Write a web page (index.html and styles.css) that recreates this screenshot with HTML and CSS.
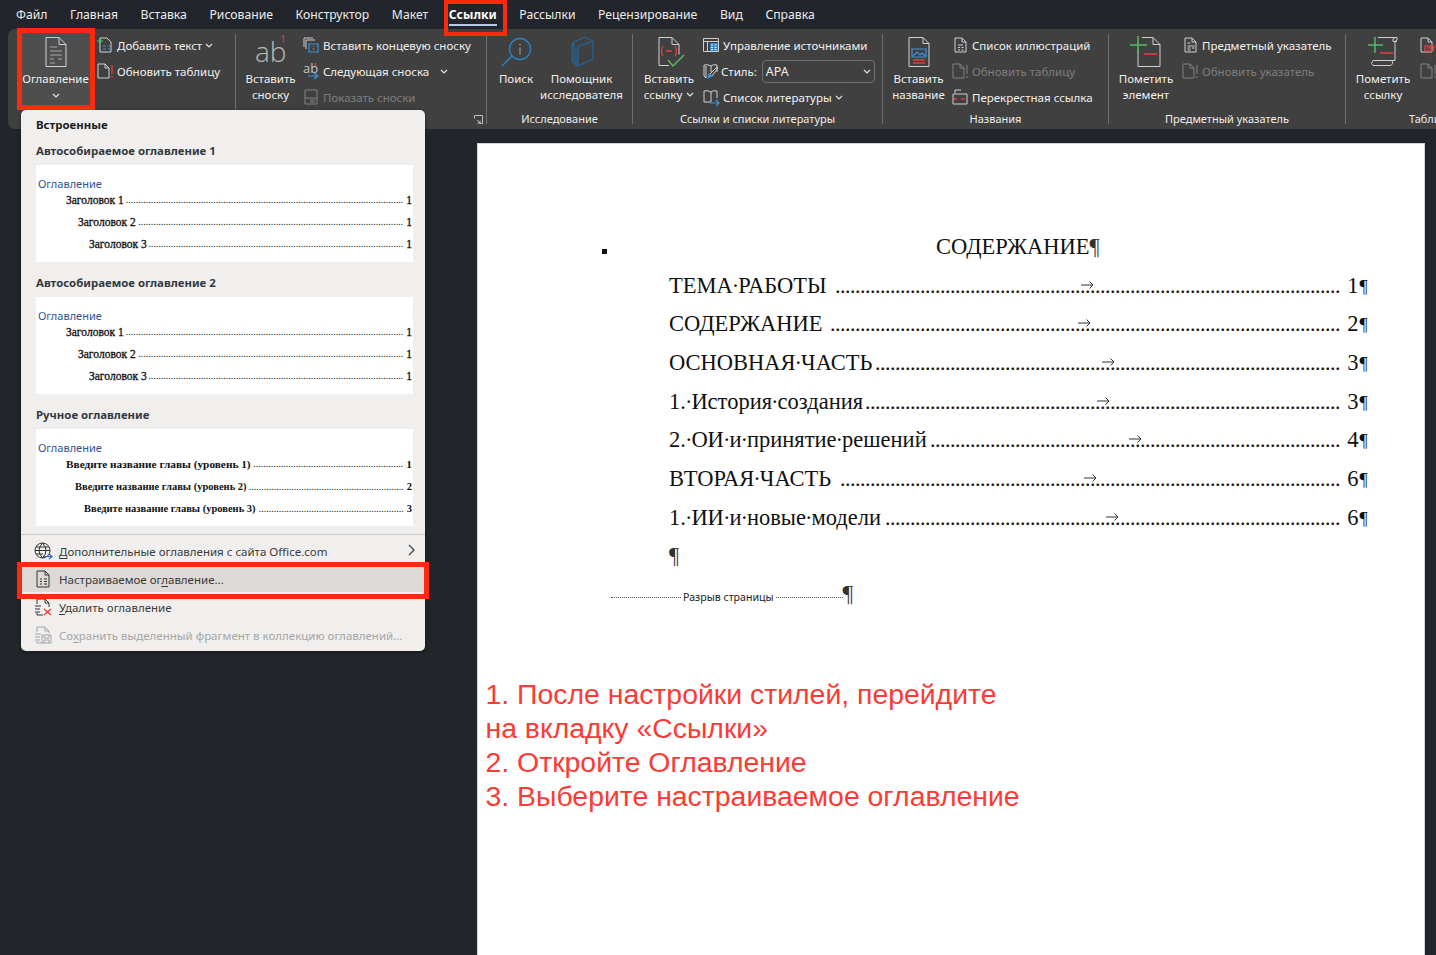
FILE: index.html
```html
<!DOCTYPE html>
<html lang="ru">
<head>
<meta charset="utf-8">
<title>Оглавление</title>
<link rel="stylesheet" href="styles.css">
</head>
<body>
<div class="app">
  <nav class="tabs">
    <span class="tab">Файл</span><span class="tab">Главная</span><span class="tab">Вставка</span><span class="tab">Рисование</span><span class="tab">Конструктор</span><span class="tab">Макет</span><span class="tab active">Ссылки</span><span class="tab">Рассылки</span><span class="tab">Рецензирование</span><span class="tab">Вид</span><span class="tab">Справка</span>
  </nav>

  <section class="ribbon">
    <div class="group g1">
      <div class="gbody">
        <div class="big w69 hot">
          <svg class="bigicon" viewBox="0 0 32 32"><path class="ln" d="M6 1.500h13l7 7v22H6z"/><path class="ln" d="M19 1.500v7h7"/><path class="ln thin" d="M10 11h7M10 15h12M10 19h12M10 23h4M18 23h4M10 27h5"/></svg>
          <span>Оглавление</span>
          <svg class="chev" viewBox="0 0 8 5"><path d="M1 1l3 3 3-3"/></svg>
        </div>
        <div class="col m7">
          <div class="row"><svg class="ico" viewBox="0 0 16 16"><path class="ln" d="M3 1h7l4 4v10H3z"/><path class="blue" d="M6 9h3M11 9h2M6 12h3M11 12h2"/><path class="green" d="M0 4h6M3 1v6"/></svg><span>Добавить текст</span><svg class="chev" viewBox="0 0 8 5"><path d="M1 1l3 3 3-3"/></svg></div>
          <div class="row"><svg class="ico" viewBox="0 0 16 16"><path class="ln" d="M1 1h7l4 4v10H1z"/><path class="ln" d="M8 1v4h4"/><path class="red" d="M15 2v9M15 13v2"/></svg><span>Обновить таблицу</span></div>
        </div>
      </div>
      <div class="glabel"></div>
    </div>
    <i class="sep"></i>

    <div class="group g2">
      <div class="gbody">
        <div class="big w49">
          <svg class="bigicon" viewBox="0 0 32 32"><text class="abtext" x="0" y="26">ab</text><text class="abnum" x="25" y="7">1</text></svg>
          <span>Вставить</span><span>сноску</span>
        </div>
        <div class="col m8">
          <div class="row"><svg class="ico" viewBox="0 0 16 16"><path class="ln" d="M1 10V1h9M3 12V3h9"/><path class="blue" d="M6 7v8h9V7zM10.500 9v1M10.500 11v2"/></svg><span>Вставить концевую сноску</span></div>
          <div class="row"><svg class="ico" viewBox="0 0 16 16"><text class="absmall" x="0" y="10">ab</text><path class="blue" d="M5 13h10M11 10l4 3-4 3"/><path class="red" d="M12.500 0v3"/></svg><span class="wide">Следующая сноска</span><svg class="chev" viewBox="0 0 8 5"><path d="M1 1l3 3 3-3"/></svg></div>
          <div class="row off"><svg class="ico" viewBox="0 0 16 16"><path class="ln" d="M2 1h12v14H2zM2 9h12M7 11h5M7 13h5"/></svg><span>Показать сноски</span></div>
        </div>
      </div>
      <div class="glabel"><svg class="launch" viewBox="0 0 9 9"><path d="M.500 3.500V.5h8v8h-3M3 5l3 3M6 5.500V8H3.500"/></svg></div>
    </div>
    <i class="sep"></i>

    <div class="group g3">
      <div class="gbody">
        <div class="big w36">
          <svg class="bigicon" viewBox="0 0 32 32"><circle class="bl" cx="20" cy="13" r="10.500"/><path class="bl" d="M12 20L2 30"/><path class="ln thin" d="M20 8v1.500M20 11.500v7"/></svg>
          <span>Поиск</span>
        </div>
        <div class="big w81 m7">
          <svg class="bigicon" viewBox="0 0 32 32"><path class="bld" d="M8 6l11-5 8 4v18l-15 7-6-4V9zM12 10l15-5M12 10v21M10 13v15M8 6v20"/></svg>
          <span>Помощник</span><span>исследователя</span>
        </div>
      </div>
      <div class="glabel">Исследование</div>
    </div>
    <i class="sep"></i>

    <div class="group g4">
      <div class="gbody">
        <div class="big w48">
          <svg class="bigicon" viewBox="0 0 32 32"><path class="ln" d="M6 1.500h13l7 7v10M19 1.500v7h7M6 1.500v28h10"/><path class="red" d="M10 10q-3 5 0 10M22 10q3 5 0 10M13 15h6"/><path class="green2" d="M15 24l5 6 11-11"/></svg>
          <span>Вставить</span><span>ссылку<svg class="chev inl" viewBox="0 0 8 5"><path d="M1 1l3 3 3-3"/></svg></span>
        </div>
        <div class="col m10">
          <div class="row"><svg class="ico" viewBox="0 0 16 16"><path class="ln" d="M.5 1.500h15v13H.5zM.5 4.500h15M4.500 4.500v10"/><path class="fillb" d="M7 6h8v8H7z"/><path class="wt" d="M8 8h2M11.500 8h2M8 10.500h2M11.500 10.500h2M8 12.500h2M11.500 12.500h2"/></svg><span>Управление источниками</span></div>
          <div class="row"><svg class="ico" viewBox="0 0 16 16"><path class="ln" d="M8 3Q5 1 1 2v11l2 2V3M8 3q2-2 6-1v7M8 3v6"/><path class="blue thick" d="M5 15l1-4 3 2z"/><path class="ln" d="M7 11l7-7 1 1-6 8"/></svg><span class="lbl">Стиль:</span><div class="select"><span>APA</span><svg class="chev" viewBox="0 0 8 5"><path d="M1 1l3 3 3-3"/></svg></div></div>
          <div class="row"><svg class="ico" viewBox="0 0 16 16"><path class="ln" d="M8 3Q5 1 1 2v11h7V3q2-2 6-1v7"/><path class="blue" d="M7 14h9M13 11l3 3-3 3"/></svg><span>Список литературы</span><svg class="chev" viewBox="0 0 8 5"><path d="M1 1l3 3 3-3"/></svg></div>
        </div>
      </div>
      <div class="glabel">Ссылки и списки литературы</div>
    </div>
    <i class="sep"></i>

    <div class="group g5">
      <div class="gbody">
        <div class="big w49">
          <svg class="bigicon" viewBox="0 0 32 32"><path class="ln" d="M6 1.500h14l6 6v23H6zM20 1.500v6h6"/><path class="blue" d="M9 13h14v8H9z"/><path class="blue" d="M10 20l4-4 3 3 2-2 3 3"/><path class="red" d="M10 24h12M10 27h12"/></svg>
          <span>Вставить</span><span>название</span>
        </div>
        <div class="col m9">
          <div class="row"><svg class="ico" viewBox="0 0 16 16"><path class="ln" d="M3 1h7l4 4v10H3zM10 1v4h4M6 8h5M6 10.500h2M9.500 10.500h2M6 13h2M9.500 13h2"/></svg><span>Список иллюстраций</span></div>
          <div class="row off"><svg class="ico" viewBox="0 0 16 16"><path class="ln" d="M1 1h7l4 4v10H1zM8 1v4h4M15 2v9M15 13v2"/></svg><span>Обновить таблицу</span></div>
          <div class="row"><svg class="ico" viewBox="0 0 16 16"><path class="ln" d="M3 4V1h6M1 5h6M1 5v10h6M7 5h8v10H7"/><path class="red" d="M9 10h4M2 10h3"/></svg><span>Перекрестная ссылка</span></div>
        </div>
      </div>
      <div class="glabel">Названия</div>
    </div>
    <i class="sep"></i>

    <div class="group g6">
      <div class="gbody">
        <div class="big w54">
          <svg class="bigicon" viewBox="0 0 32 32"><path class="ln" d="M12 1.500h11l7 7v22H8V14M23 1.500v7h7"/><path class="green2" d="M0 9h17M8 0v17"/><path class="red" d="M14 18h13"/></svg>
          <span>Пометить</span><span>элемент</span>
        </div>
        <div class="col m9">
          <div class="row"><svg class="ico" viewBox="0 0 16 16"><path class="ln" d="M3 1h7l4 4v10H3zM10 1v4h4M5.500 6h3M5.500 9h7M5.500 11h3M10 11h2.500M5.500 13h3"/></svg><span>Предметный указатель</span></div>
          <div class="row off"><svg class="ico" viewBox="0 0 16 16"><path class="ln" d="M1 1h7l4 4v10H1zM8 1v4h4M15 2v9M15 13v2"/></svg><span>Обновить указатель</span></div>
        </div>
      </div>
      <div class="glabel">Предметный указатель</div>
    </div>
    <i class="sep"></i>

    <div class="group g7">
      <div class="gbody">
        <div class="big w54">
          <svg class="bigicon" viewBox="0 0 32 32"><path class="ln" d="M11 1.500h19q1 3-2 4v19H6q-3 3 0 5h18q3-2 1-5M28 1.500q-3 1-2 4h4"/><path class="green2" d="M1 9h15M8 1v16"/><path class="red" d="M13 17h13"/></svg>
          <span>Пометить</span><span>ссылку</span>
        </div>
        <div class="col m10">
          <div class="row"><svg class="ico" viewBox="0 0 16 16"><path class="ln" d="M1 1h7l4 4v10H1zM8 1v4h4"/><path class="red" d="M5 9h9l-1 5H5zM7 11h5"/></svg></div>
          <div class="row off"><svg class="ico" viewBox="0 0 16 16"><path class="ln" d="M1 1h7l4 4v10H1zM8 1v4h4M15 2v9M15 13v2"/></svg></div>
        </div>
      </div>
      <div class="glabel gl7">Таблица ссылок</div>
    </div>
  </section>

  <main class="workspace">
    <article class="page">
      <div class="doc">
        <div class="title-row"><i class="mark"></i><h1 class="doc-title">СОДЕРЖАНИЕ<span class="pil">¶</span></h1></div>
        <div class="toc-row"><span>ТЕМА<span class="d">·</span>РАБОТЫ</span><span class="dots">.....................................................................................................</span><svg class="arrow a1" viewBox="0 0 13 8"><path d="M0 4h12M8.500 .5L12 4 8.500 7.500"/></svg><span class="num">1</span><span class="rp">¶</span></div>
        <div class="toc-row"><span>СОДЕРЖАНИЕ</span><span class="dots">......................................................................................................</span><svg class="arrow a2" viewBox="0 0 13 8"><path d="M0 4h12M8.500 .5L12 4 8.500 7.500"/></svg><span class="num">2</span><span class="rp">¶</span></div>
        <div class="toc-row"><span>ОСНОВНАЯ<span class="d">·</span>ЧАСТЬ</span><span class="dots">.............................................................................................</span><svg class="arrow a3" viewBox="0 0 13 8"><path d="M0 4h12M8.500 .5L12 4 8.500 7.500"/></svg><span class="num">3</span><span class="rp">¶</span></div>
        <div class="toc-row"><span>1.<span class="d">·</span>История<span class="d">·</span>создания</span><span class="dots">...............................................................................................</span><svg class="arrow a4" viewBox="0 0 13 8"><path d="M0 4h12M8.500 .5L12 4 8.500 7.500"/></svg><span class="num">3</span><span class="rp">¶</span></div>
        <div class="toc-row"><span>2.<span class="d">·</span>ОИ<span class="d">·</span>и<span class="d">·</span>принятие<span class="d">·</span>решений</span><span class="dots">..................................................................................</span><svg class="arrow a5" viewBox="0 0 13 8"><path d="M0 4h12M8.500 .5L12 4 8.500 7.500"/></svg><span class="num">4</span><span class="rp">¶</span></div>
        <div class="toc-row"><span>ВТОРАЯ<span class="d">·</span>ЧАСТЬ</span><span class="dots">....................................................................................................</span><svg class="arrow a6" viewBox="0 0 13 8"><path d="M0 4h12M8.500 .5L12 4 8.500 7.500"/></svg><span class="num">6</span><span class="rp">¶</span></div>
        <div class="toc-row"><span>1.<span class="d">·</span>ИИ<span class="d">·</span>и<span class="d">·</span>новые<span class="d">·</span>модели</span><span class="dots">...........................................................................................</span><svg class="arrow a7" viewBox="0 0 13 8"><path d="M0 4h12M8.500 .5L12 4 8.500 7.500"/></svg><span class="num">6</span><span class="rp">¶</span></div>
        <div class="toc-row"><span class="pil">¶</span></div>
        <div class="break-row"><i class="bk"></i><span>Разрыв страницы</span><i class="bk bk2"></i><span class="pil">¶</span></div>
      </div>
      <p class="note">1. После настройки стилей, перейдите<br>на вкладку «Ссылки»<br>2. Откройте Оглавление<br>3. Выберите настраиваемое оглавление</p>
    </article>
  </main>

  <aside class="menu">
    <div class="mhead top">Встроенные</div>
    <div class="mhead">Автособираемое оглавление 1</div>
    <div class="thumb">
      <div class="ttitle">Оглавление</div>
      <div class="trow l1"><span>Заголовок 1</span><span class="tdots">...............................................................................................................</span><span>1</span></div>
      <div class="trow l2"><span>Заголовок 2</span><span class="tdots">..........................................................................................................</span><span>1</span></div>
      <div class="trow l3"><span>Заголовок 3</span><span class="tdots">......................................................................................................</span><span>1</span></div>
    </div>
    <div class="mhead">Автособираемое оглавление 2</div>
    <div class="thumb">
      <div class="ttitle">Оглавление</div>
      <div class="trow l1"><span>Заголовок 1</span><span class="tdots">...............................................................................................................</span><span>1</span></div>
      <div class="trow l2"><span>Заголовок 2</span><span class="tdots">..........................................................................................................</span><span>1</span></div>
      <div class="trow l3"><span>Заголовок 3</span><span class="tdots">......................................................................................................</span><span>1</span></div>
    </div>
    <div class="mhead">Ручное оглавление</div>
    <div class="thumb manual">
      <div class="ttitle">Оглавление</div>
      <div class="trow l1 strong"><span>Введите название главы (уровень 1)</span><span class="tdots">............................................................</span><span>1</span></div>
      <div class="trow l2b"><span>Введите название главы (уровень 2)</span><span class="tdots">..............................................................</span><span>2</span></div>
      <div class="trow l3b"><span>Введите название главы (уровень 3)</span><span class="tdots">..........................................................</span><span>3</span></div>
    </div>
    <hr class="msep">
    <div class="mitem"><svg class="mico" viewBox="0 0 18 18"><circle class="dk" cx="8.500" cy="8.500" r="7.500"/><path class="dk" d="M1 8.500h15M2 5h13M2 12h7M8.500 1q-7 7.500 0 15M8.500 1q7 7.500 0 15"/><path class="bd" d="M10 14.500h8M15 12l3 2.500-3 2.500"/></svg><span class="mtext"><u>Д</u>ополнительные оглавления с сайта Office.com</span><svg class="mchev" viewBox="0 0 7 12"><path d="M1 1l5 5-5 5"/></svg></div>
    <div class="mitem hov"><svg class="mico" viewBox="0 0 18 18"><path class="dk" d="M3 1h8l4 4v12H3zM11 1v4h4M6 9h2M10 9h3M6 11.500h2M10 11.500h3M6 14h2M10 14h3"/></svg><span class="mtext">Настраиваемое ог<u>л</u>авление...</span></div>
    <div class="mitem"><svg class="mico" viewBox="0 0 18 18"><path class="dk" d="M3 6V1h8l4 4v4M11 1v4h4M3 15v2h6M1 8h6M1 11h5M1 14h5"/><path class="xr" d="M10 11l7 6M17 11l-7 6"/></svg><span class="mtext"><u>У</u>далить оглавление</span></div>
    <div class="mitem dis"><svg class="mico" viewBox="0 0 18 18"><path class="gr" d="M3 6V1h8l4 4v2M11 1v4h4M3 15v2h5M1 8h6M1 11h5M1 14h5M8 9h9v8H8zM10 9v3h5V9M10 17v-3h5v3"/></svg><span class="mtext">Со<u>х</u>ранить выделенный фрагмент в коллекцию оглавлений...</span></div>
  </aside>

  <div class="redbox rb-tab"></div>
  <div class="redbox rb-toc"></div>
  <div class="redbox rb-item"></div>
</div>
</body>
</html>
```
FILE: styles.css
```css
* { box-sizing: border-box; }
html, body { margin: 0; padding: 0; }
body { background: #22252b; overflow: hidden; }
.app { position: relative; width: 1436px; height: 955px; overflow: hidden; font-family: "Noto Sans", "Open Sans", sans-serif; font-size: 11.5px; color: #f0f0f0; display: flex; flex-direction: column; }

/* tabs */
.tabs { height: 29px; display: flex; align-items: center; gap: 22.600px; padding-left: 16px; flex: none; font-size: 12.200px; color: #ececec; }
.tab { position: relative; line-height: 29px; white-space: nowrap; }
.tab.active { font-weight: 700; color: #fff; margin-left: -2px; }
.tab.active::after { content: ""; position: absolute; left: 0; right: 0; bottom: 3px; height: 2px; background: #b5cbe8; }

/* ribbon */
.ribbon { flex: none; height: 100px; margin-left: 8px; background: #404040; border-radius: 7px 0 0 7px; display: flex; padding-top: 4px; overflow: hidden; }
.group { height: 94px; display: flex; flex-direction: column; flex: none; }
.g1 { width: 227px; padding-left: 14px; }
.g2 { width: 250px; padding-left: 10px; }
.g3 { width: 145px; padding-left: 11px; }
.g4 { width: 249px; padding-left: 12px; }
.g5 { width: 225px; padding-left: 11px; }
.g6 { width: 236px; padding-left: 10px; }
.g7 { width: 90px; padding-left: 10px; }
.sep { flex: none; width: 1px; height: 90px; margin-top: 1px; background: #6d6d6d; }
.gbody { height: 78px; display: flex; flex: none; }
.glabel { height: 16px; line-height: 16px; text-align: center; font-size: 11px; color: #eee; white-space: nowrap; position: relative; }
.g3 .glabel { margin-left: -11px; }
.g4 .glabel { margin-left: -12px; }
.g5 .glabel { margin-left: -11px; }
.g6 .glabel { margin-left: -10px; }
.gl7 { text-align: left; padding-left: 53px; }
.launch { position: absolute; right: 3px; top: 4px; width: 9px; height: 9px; fill: none; stroke: #bdbdbd; stroke-width: 1; }

.big { display: flex; flex-direction: column; align-items: center; line-height: 16px; padding-top: 3px; white-space: nowrap; flex: none; }
.big.hot { background: #4e4e4e; height: 78px; padding-right: 2px; }
.bigicon { width: 32px; height: 32px; margin-bottom: 3px; flex: none; overflow: visible; }
.w36 { width: 36px; } .w48 { width: 48px; } .w49 { width: 49px; } .w54 { width: 54px; } .w69 { width: 69px; } .w81 { width: 81px; }
.m7 { margin-left: 7px; } .m8 { margin-left: 8px; } .m9 { margin-left: 9px; } .m10 { margin-left: 10px; }
.g1 .col { margin-left: 6px; }
.col { display: flex; flex-direction: column; margin-top: -1px; }
.row { height: 26px; display: flex; align-items: center; gap: 4px; white-space: nowrap; }
.row.off { color: #7e7e7e; }
.row.off .ln { stroke: #808080; }
.ico { width: 16px; height: 16px; flex: none; overflow: visible; }
.chev { width: 8px; height: 5px; fill: none; stroke: #e2e2e2; stroke-width: 1.200; flex: none; }
.row > .chev { margin-left: -1px; }
.big .chev { margin-top: 6px; }
.big .chev.inl { margin: 0 0 2px 4px; display: inline-block; }
.wide { margin-right: 8px; }
.lbl { margin-left: -2px; }
.select { width: 113px; height: 23px; margin-left: 1px; border: 1px solid #717171; border-radius: 4px; display: flex; align-items: center; justify-content: space-between; padding: 0 3px; font-size: 12.500px; }

.ln { fill: none; stroke: #cfcfcf; stroke-width: 1; }
.thin { stroke: #a8a8a8; }
.blue { fill: none; stroke: #3d94db; stroke-width: 1.200; }
.blue.thick { fill: #3d94db; }
.green { fill: none; stroke: #55c26b; stroke-width: 1.200; }
.green2 { fill: none; stroke: #57b968; stroke-width: 1.500; }
.red { fill: none; stroke: #e0413f; stroke-width: 1.300; }
.bl { fill: none; stroke: #2c7fc0; stroke-width: 1.400; }
.bld { fill: none; stroke: #22689f; stroke-width: 1.100; }
.fillb { fill: #2e86cc; }
.wt { fill: none; stroke: #e8f2fb; stroke-width: 1; }
.abtext { font-family: "Open Sans", sans-serif; font-weight: 300; font-size: 28px; fill: #b8b8b8; }
.abnum { font-family: "Open Sans", sans-serif; font-size: 10px; fill: #e0413f; }
.absmall { font-family: "Open Sans", sans-serif; font-size: 13px; fill: #c4c4c4; }

/* page */
.workspace { flex: 1; min-height: 0; padding: 14px 11px 0 477px; }
.page { height: 100%; background: #fff; border: 1px solid #d4d4d4; border-bottom: 0; color: #111; overflow: hidden; }
.doc { padding: 84px 0 0 124px; font-family: "Liberation Serif", serif; font-size: 22.500px; }
.title-row { display: flex; height: 38.670px; align-items: center; }
.mark { width: 5px; height: 5px; background: #111; margin-top: 8px; flex: none; }
.doc-title { margin: 0 0 0 329px; font-size: 22.500px; font-weight: 400; line-height: 38px; white-space: nowrap; }
.pil { color: #333; }
.d { margin: 0 -1px; }
.toc-row { position: relative; display: flex; width: 699px; margin-left: 67px; height: 38.670px; line-height: 37px; white-space: pre; }
.dots { flex: 1; min-width: 0; text-align: right; font-size: 20px; line-height: 39px; margin-right: 7px; -webkit-text-stroke: .2px #111; }
.num { flex: none; }
.rp { flex: none; min-width: 9.500px; padding-left: 1px; font-size: 18px; line-height: 41px; }
.arrow { position: absolute; top: 14px; width: 13px; height: 8px; fill: none; stroke: #333; stroke-width: 1; }
.a1 { left: 412px; } .a2 { left: 409px; } .a3 { left: 433px; } .a4 { left: 428px; } .a5 { left: 460px; } .a6 { left: 415px; } .a7 { left: 437px; }
.break-row { display: flex; align-items: center; margin-left: 9px; height: 38.670px; padding-top: 4px; font-family: "Noto Sans", sans-serif; font-size: 10.600px; gap: 2px; white-space: nowrap; color: #222; }
.bk { width: 70px; border-top: 1px dotted #555; }
.bk2 { width: 67px; }
.break-row .pil { font-family: "Liberation Serif", serif; font-size: 24px; margin: -8px 0 0 -2px; }
.note { margin: 62px 0 0 7.500px; font-family: "Liberation Sans", sans-serif; font-size: 28.400px; line-height: 34px; color: #fb3b34; white-space: nowrap; }

/* menu */
.menu { position: absolute; left: 21px; top: 110px; width: 404px; height: 541px; padding-top: 2px; background: #f0efee; border-radius: 5px; color: #262626; box-shadow: 0 1px 4px rgba(0,0,0,.4); font-size: 11.500px; }
.mhead { height: 26px; line-height: 26px; padding-left: 15px; font-size: 11.400px; font-weight: 700; color: #34383f; }
.mhead.top { color: #1c1c1c; }
.thumb { width: 377px; height: 97px; margin: 1px 0 8px 15px; background: #fff; padding: 11px 1px 0 2px; color: #111; font-family: "Liberation Serif", serif; font-size: 11.500px; }
.ttitle { font-family: "Noto Sans", sans-serif; font-size: 11px; line-height: 16px; color: #2f5496; height: 13px; }
.trow { display: flex; height: 22px; line-height: 22px; white-space: pre; -webkit-text-stroke: .3px #111; }
.tdots { flex: 1; min-width: 0; text-align: right; font-size: 10px; font-weight: 400; margin-right: 3px; -webkit-text-stroke: 0; }
.l1 { padding-left: 28px; } .l2 { padding-left: 40px; } .l3 { padding-left: 51px; }
.l2b { padding-left: 37px; } .l3b { padding-left: 46px; }
.manual .trow { height: 22.500px; font-weight: 700; -webkit-text-stroke: 0; font-size: 10.500px; }
.manual .trow.strong { font-size: 11.300px; }
.msep { height: 1px; margin: 2px 0 1px; border: 0; background: #cbcaca; }
.mitem { height: 28px; display: flex; align-items: center; padding: 2px 10px 0 13px; color: #3a3a3a; white-space: nowrap; }
.mitem.hov { background: #dcd9d6; }
.mitem.dis { color: #a6a6a6; }
.mico { width: 18px; height: 18px; flex: none; margin-right: 7px; overflow: visible; }
.mtext { flex: 1; }
.mtext u { text-underline-offset: 2px; }
.mchev { width: 7px; height: 12px; fill: none; stroke: #444; stroke-width: 1.300; margin-bottom: 3px; }
.dk { fill: none; stroke: #333; stroke-width: 1; }
.bd { fill: none; stroke: #2b6fc4; stroke-width: 1.200; }
.xr { fill: none; stroke: #e0413f; stroke-width: 1.400; }
.gr { fill: none; stroke: #a6a6a6; stroke-width: 1; }

/* annotations */
.redbox { position: absolute; border: 5px solid #fa2a0c; pointer-events: none; }
.rb-tab { left: 444px; top: 0; width: 63px; height: 36px; border-width: 4px; }
.rb-toc { left: 17px; top: 28px; width: 78px; height: 82px; }
.rb-item { left: 17px; top: 562px; width: 412px; height: 37px; }
```
